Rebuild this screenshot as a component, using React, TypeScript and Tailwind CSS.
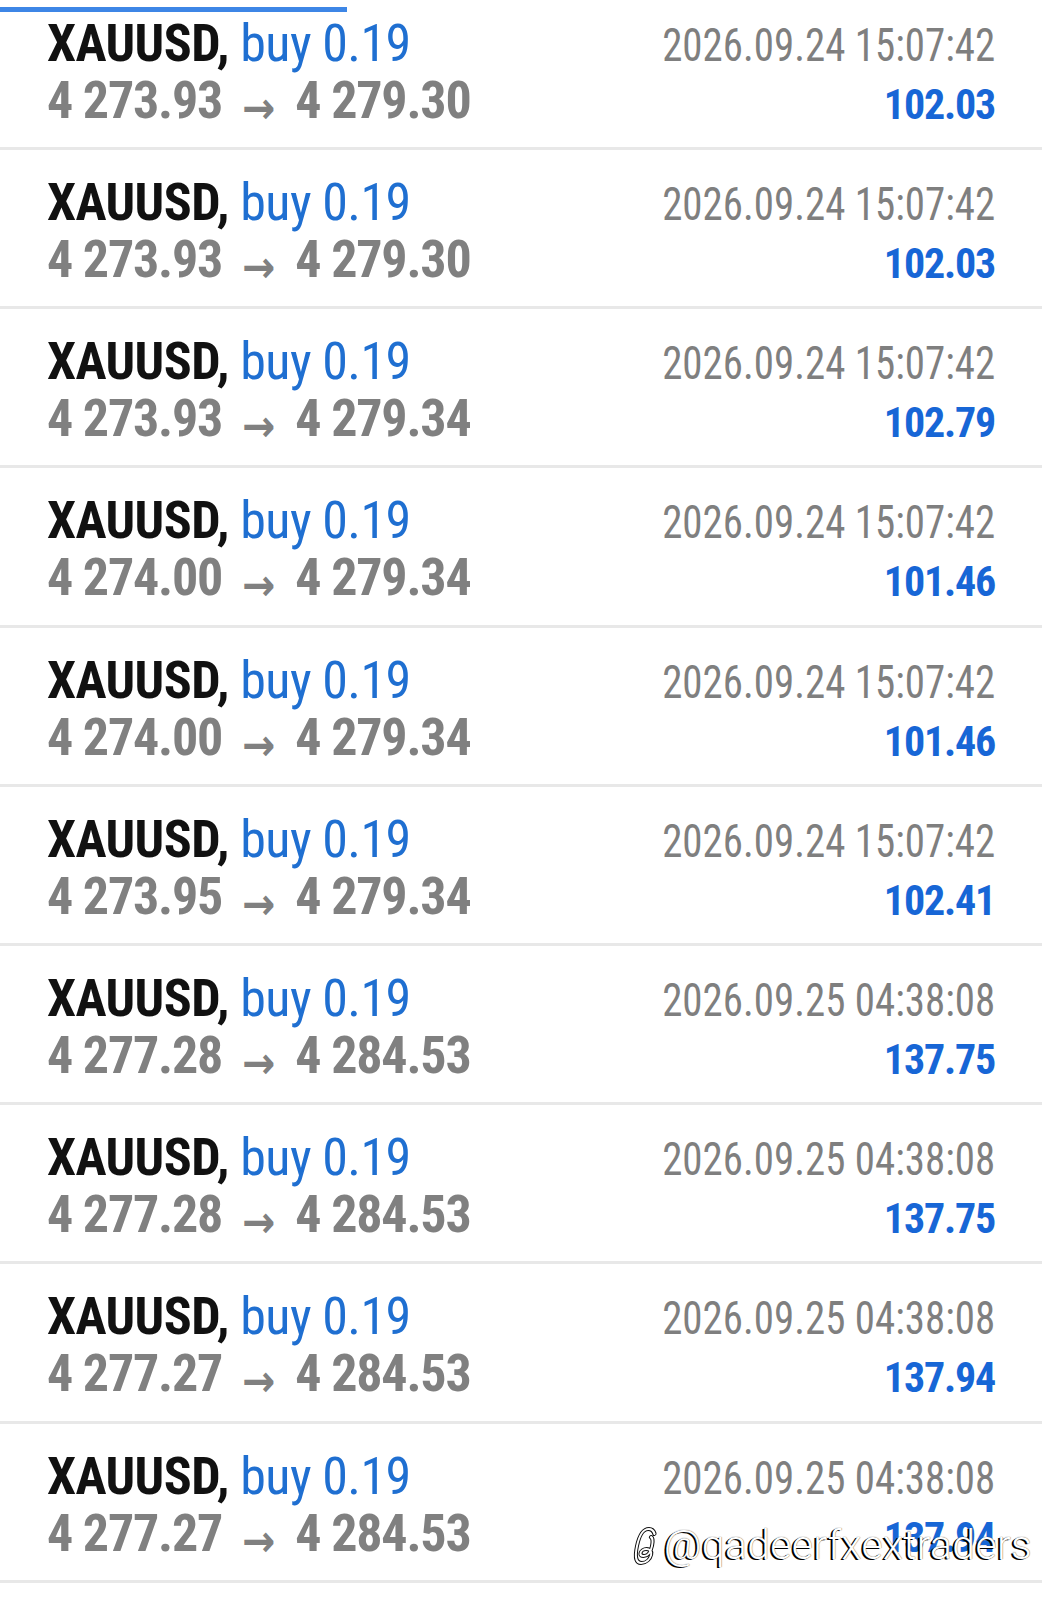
const trades = [
  { open: "4 273.93", close: "4 279.30", time: "2026.09.24 15:07:42", profit: "102.03" },
  { open: "4 273.93", close: "4 279.30", time: "2026.09.24 15:07:42", profit: "102.03" },
  { open: "4 273.93", close: "4 279.34", time: "2026.09.24 15:07:42", profit: "102.79" },
  { open: "4 274.00", close: "4 279.34", time: "2026.09.24 15:07:42", profit: "101.46" },
  { open: "4 274.00", close: "4 279.34", time: "2026.09.24 15:07:42", profit: "101.46" },
  { open: "4 273.95", close: "4 279.34", time: "2026.09.24 15:07:42", profit: "102.41" },
  { open: "4 277.28", close: "4 284.53", time: "2026.09.25 04:38:08", profit: "137.75" },
  { open: "4 277.28", close: "4 284.53", time: "2026.09.25 04:38:08", profit: "137.75" },
  { open: "4 277.27", close: "4 284.53", time: "2026.09.25 04:38:08", profit: "137.94" },
  { open: "4 277.27", close: "4 284.53", time: "2026.09.25 04:38:08", profit: "137.94" },
];

// threads mark, drawn as a white stroke with dark edges like the watermark
const threadsPath =
  "M18 8C16 4 13 3 11 3 6 3 3 9 3 20s3 17 8 17c5 0 8-4 8-8 0-4-3-6-6-6s-5 2-5 4 2 3 4 3c4 0 6-4 6-10 0-5-1-8-3-9";

const ThreadsLogo = () => (
  <svg width="24" height="40" viewBox="0 0 24 40" fill="none" className="-skew-x-12">
    <path d={threadsPath} stroke="#111" strokeWidth="4" strokeLinecap="round" />
    <path d={threadsPath} stroke="#fff" strokeWidth="2" strokeLinecap="round" />
  </svg>
);

const TradeRow = ({ t, first }: { t: (typeof trades)[number]; first?: boolean }) => (
  <div
    className={
      "flex justify-between px-[47px] border-b-[3px] border-[#e8e8e8] " +
      (first ? "h-[150px] pt-[15px]" : "h-[159.2px] pt-[24px]")
    }
  >
    <div className="flex flex-col leading-[57px] whitespace-nowrap">
      <div className="text-[52px] tracking-[-0.6px]">
        <span className="font-bold text-[#111111]">XAUUSD,</span>{" "}
        <span className="text-[#1f6fd1]">buy 0.19</span>
      </div>
      <div className="text-[52px] font-bold text-[#808080] tracking-[-1.2px]">
        <span>{t.open}</span>
        <span
          className="inline-block ml-[20px] mr-[20px] font-bold text-[44px] tracking-normal align-[-5px]"
          style={{ fontFamily: '"DejaVu Sans", sans-serif' }}
        >
          →
        </span>
        <span>{t.close}</span>
      </div>
    </div>
    <div className="flex flex-col items-end leading-[57px] whitespace-nowrap pt-[2px]">
      <div className="text-[46px] text-[#7f7f7f] scale-x-[0.89] origin-right">{t.time}</div>
      <div className="text-[42px] font-bold text-[#1766d6] tracking-[-1.2px] pt-[2px]">{t.profit}</div>
    </div>
  </div>
);

export default function App() {
  return (
    <div
      className="relative w-[1042px] h-[1600px] overflow-hidden bg-white"
      style={{ fontFamily: '"Roboto Condensed", Roboto, sans-serif', fontStretch: "condensed" }}
    >
      <div className="absolute top-[7px] left-0 w-[347px] h-[5px] bg-[#3d86e6]" />
      {trades.map((t, i) => (
        <TradeRow key={i} t={t} first={i === 0} />
      ))}
      <div className="absolute left-[634px] top-[1525px] flex items-center gap-[6px]">
        <ThreadsLogo />
        <span
          className="text-[41px] font-light text-white leading-none tracking-[0.3px]"
          style={{ fontFamily: "Roboto, sans-serif", fontStretch: "normal", textShadow: "-2px 1px 0 #000, 0 0 1px #222" }}
        >
          @qadeerfxextraders
        </span>
      </div>
    </div>
  );
}
